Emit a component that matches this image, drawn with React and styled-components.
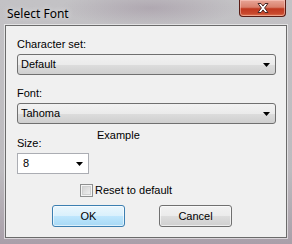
import React from "react";
import styled, { createGlobalStyle } from "styled-components";

const Global = createGlobalStyle`
  html, body {
    margin: 0;
    padding: 0;
    background: #b9b7bb;
  }
  * { box-sizing: border-box; }
`;

const Win = styled.div`
  width: 292px;
  height: 244px;
  display: flex;
  flex-direction: column;
  background:
    radial-gradient(ellipse 90px 18px at 150px 8px, rgba(140, 120, 140, 0.35), transparent),
    linear-gradient(180deg, #c3c2c5 0%, #bdbbbf 70%, #a99fa9 100%);
  position: relative;
  font-family: "Liberation Sans", Arial, sans-serif;
`;

const TitleBar = styled.div`
  height: 25px;
  display: flex;
  align-items: flex-start;
  padding: 5px 0 0 7px;
  font-family: "Noto Sans", "Open Sans", sans-serif;
  font-size: 12px;
  color: #000;
  text-shadow: 0 0 6px rgba(255, 255, 255, 0.8);
`;

const CloseBtn = styled.div`
  position: absolute;
  left: 239px;
  top: 0;
  width: 47px;
  height: 17px;
  border: 1px solid #5a1c14;
  border-top: none;
  border-radius: 0 0 4px 4px;
  background: linear-gradient(180deg, #e8a597 0%, #d9806c 45%, #c0381f 55%, #c8492e 85%, #e07a55 100%);
  box-shadow: inset 0 0 0 1px rgba(255, 210, 200, 0.5);
  display: flex;
  align-items: center;
  justify-content: center;
`;

const Client = styled.div`
  margin: 0 5px 5px 5px;
  height: 213px;
  background: #f0f0f0;
  border: 1px solid #6b6b6b;
  box-shadow: 0 0 0 1px rgba(255, 255, 255, 0.55);
  padding: 12px 10px 0 11px;
  font-size: 11px;
  color: #000;
`;

const Label = styled.div`
  line-height: 13px;
  height: 13px;
  margin-top: ${(p) => p.$top || 0}px;
`;

const Combo = styled.div`
  width: ${(p) => p.$w || 259}px;
  height: 21px;
  margin-top: 3px;
  border: 1px solid ${(p) => (p.$edit ? "#abadb3" : "#707070")};
  border-radius: ${(p) => (p.$edit ? 0 : 3)}px;
  background: ${(p) =>
    p.$edit
      ? "#fff"
      : "linear-gradient(180deg, #f2f2f2 0%, #ebebeb 50%, #dddddd 51%, #cfcfcf 100%)"};
  display: flex;
  align-items: center;
  justify-content: space-between;
  padding: 0 5px 0 ${(p) => (p.$edit ? 5 : 3)}px;
  line-height: 13px;
`;

const Arrow = () => (
  <svg width="7" height="4" viewBox="0 0 7 4">
    <path d="M0 0h7L3.5 4z" fill="#000" />
  </svg>
);

const SizeRow = styled.div`
  display: flex;
  margin-top: 5px;
  gap: 8px;
`;

const SizeCol = styled.div`
  width: 72px;
  padding-top: 8px;
  display: flex;
  flex-direction: column;
`;

const Example = styled.div`
  line-height: 13px;
`;

const CheckRow = styled.label`
  display: flex;
  align-items: center;
  gap: 2px;
  margin-top: 10px;
  padding-left: 63px;
  line-height: 13px;
`;

const Box = styled.span`
  width: 13px;
  height: 13px;
  border: 1px solid #8e8f8f;
  background: #f4f4f4;
  box-shadow: inset 0 0 0 1px #f4f4f4, inset 0 0 0 2px #cfd0d0;
  background: linear-gradient(135deg, #cbcbcb, #f6f6f6);
`;

const Buttons = styled.div`
  display: flex;
  gap: 34px;
  margin-top: 8px;
  padding-left: 35px;
`;

const Button = styled.div`
  width: 73px;
  height: 22px;
  border: 1px solid ${(p) => (p.$default ? "#3c7fb1" : "#707070")};
  border-radius: 3px;
  background: ${(p) =>
    p.$default
      ? "linear-gradient(180deg, #eaf6fd 0%, #d9f0fc 50%, #bee6fd 51%, #a7d9f5 100%)"
      : "linear-gradient(180deg, #f2f2f2 0%, #ebebeb 50%, #dddddd 51%, #cfcfcf 100%)"};
  box-shadow: inset 0 0 0 1px rgba(255, 255, 255, 0.6);
  display: flex;
  align-items: center;
  justify-content: center;
  line-height: 13px;
`;

export default function App() {
  return (
    <>
      <Global />
      <Win>
        <TitleBar>Select Font</TitleBar>
        <CloseBtn>
          <svg width="14" height="12" viewBox="0 0 14 12">
            <path
              d="M2 1.5h3l2 2.6 2-2.6h3L8.6 6 12 10.5H9L7 7.9 5 10.5H2L5.4 6z"
              fill="#fff"
              stroke="#4a2a28"
              strokeWidth="1"
              strokeLinejoin="round"
            />
          </svg>
        </CloseBtn>
        <Client>
          <Label>Character set:</Label>
          <Combo>
            <span>Default</span>
            <Arrow />
          </Combo>
          <Label $top={12}>Font:</Label>
          <Combo>
            <span>Tahoma</span>
            <Arrow />
          </Combo>
          <SizeRow>
            <SizeCol>
              <Label>Size:</Label>
              <Combo $edit $w={72}>
                <span>8</span>
                <Arrow />
              </Combo>
            </SizeCol>
            <Example>Example</Example>
          </SizeRow>
          <CheckRow>
            <Box />
            <span>Reset to default</span>
          </CheckRow>
          <Buttons>
            <Button $default>OK</Button>
            <Button>Cancel</Button>
          </Buttons>
        </Client>
      </Win>
    </>
  );
}
